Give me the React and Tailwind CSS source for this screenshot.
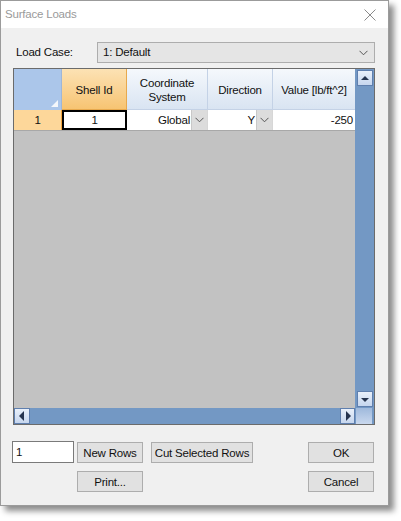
import React from "react";

const font = { fontFamily: '"Liberation Sans", Arial, sans-serif' };

const Chevron = ({ className = "" }) => (
  <svg width="9" height="6" viewBox="0 0 9 6" className={className}>
    <path d="M0.5 0.8 L4.5 4.8 L8.5 0.8" fill="none" stroke="#555" strokeWidth="1" />
  </svg>
);

const ScrollButton = ({ dir, className = "" }) => {
  const paths = {
    up: "M2 8 L6 4 L10 8 Z",
    down: "M2 5 L10 5 L6 9 Z",
    left: "M8 2 L8 12 L3 7 Z",
    right: "M5 2 L5 12 L10 7 Z",
  };
  const vertical = dir === "up" || dir === "down";
  return (
    <div
      className={`flex items-center justify-center border border-[#5f7fae] bg-gradient-to-b from-[#e9f0fa] to-[#c6d6ee] ${className}`}
    >
      <svg width={vertical ? 12 : 13} height={vertical ? 12 : 14} viewBox={vertical ? "0 0 12 12" : "0 0 13 14"}>
        <path d={paths[dir]} fill="#26344f" />
      </svg>
    </div>
  );
};

const Button = ({ children, className = "" }) => (
  <button
    className={`h-[21px] w-[66px] whitespace-nowrap border border-[#adadad] bg-[#e1e1e1] pt-[2px] text-[11.5px] tracking-[-0.2px] text-[#111] ${className}`}
  >
    {children}
  </button>
);

const ComboCell = ({ value, width }) => (
  <div className={`flex h-full ${width} border-r border-[#d7d7d7] bg-white`}>
    <div className="flex flex-1 items-center justify-end pr-[1px] pt-[1px]">{value}</div>
    <div className="flex w-[16px] items-center justify-center border-l border-[#c8c8c8] bg-[#dcdcdc]">
      <Chevron />
    </div>
  </div>
);

export default function App() {
  return (
    <div className="h-[521px] w-[401px] bg-white" style={font}>
      <div className="flex h-[506px] w-[389px] flex-col border border-[#9b9b9b] bg-[#f0f0f0] shadow-[5px_5px_6px_rgba(0,0,0,0.45)]">
        {/* Title bar */}
        <div className="flex h-[27px] items-center justify-between bg-white pl-[4px] pr-[12px]">
          <span className="text-[11.5px] tracking-[-0.2px] text-[#9a9a9a]">Surface Loads</span>
          <svg width="12" height="12" viewBox="0 0 12 12">
            <path d="M0.5 0.5 L11.5 11.5 M11.5 0.5 L0.5 11.5" stroke="#8a8a8a" strokeWidth="1" />
          </svg>
        </div>

        {/* Load case */}
        <div className="mt-[14px] flex h-[21px] items-center text-[11.5px] tracking-[-0.2px] text-[#111]">
          <span className="ml-[15px] w-[81px] pt-[1px]">Load Case:</span>
          <div className="flex h-[21px] w-[278px] items-center justify-between border border-[#adadad] bg-[#e5e5e5] pl-[5px] pr-[6px]">
            <span className="pt-[1px]">1: Default</span>
            <Chevron />
          </div>
        </div>

        {/* Grid */}
        <div className="ml-[12px] mt-[5px] flex h-[357px] w-[362px] flex-col border border-[#6b6b6b]">
          <div className="flex flex-1">
            <div className="flex flex-1 flex-col bg-[#c2c2c2] text-[11.5px] tracking-[-0.2px] text-[#111]">
              {/* Header */}
              <div className="flex h-[41px]">
                <div className="relative w-[48px] border-r border-[#9fb6d8] bg-[#abc6ea]">
                  <div className="absolute bottom-[3px] right-[3px] h-0 w-0 border-b-[7px] border-l-[7px] border-b-[#f4f7fb] border-l-transparent" />
                </div>
                <div className="flex w-[65px] items-center justify-center border-b border-r border-[#e7a94e] bg-gradient-to-b from-[#fce2b4] to-[#f7c472] pt-[3px]">
                  Shell Id
                </div>
                <div className="flex w-[81px] items-center justify-center border-b border-r border-[#c4d2e6] bg-gradient-to-b from-[#f5f8fc] to-[#d9e4f2] pt-[1px] text-center leading-[14px]">
                  Coordinate
                  <br />
                  System
                </div>
                <div className="flex w-[65px] items-center justify-center border-b border-r border-[#c4d2e6] bg-gradient-to-b from-[#f5f8fc] to-[#d9e4f2] pt-[3px]">
                  Direction
                </div>
                <div className="flex w-[82px] items-center justify-center whitespace-nowrap border-b border-[#c4d2e6] bg-gradient-to-b from-[#f5f8fc] to-[#d9e4f2] pt-[3px]">
                  Value [lb/ft^2]
                </div>
              </div>
              {/* Row 1 */}
              <div className="flex h-[21px] border-b border-[#a8a8a8]">
                <div className="flex w-[48px] items-center justify-center border-r border-[#f0a23c] bg-[#fdd79a] pt-[1px]">1</div>
                <div className="flex w-[65px] items-center justify-center border-2 border-black bg-white pt-[1px]">1</div>
                <ComboCell value="Global" width="w-[81px]" />
                <ComboCell value="Y" width="w-[65px]" />
                <div className="flex w-[82px] items-center justify-end bg-white pr-[2px] pt-[1px]">-250</div>
              </div>
            </div>
            {/* Vertical scrollbar */}
            <div className="flex w-[19px] flex-col justify-between bg-[#7398c4] pl-[2px] pr-[1px]">
              <ScrollButton dir="up" className="mt-[1px] h-[16px] w-[16px]" />
              <ScrollButton dir="down" className="mb-[1px] h-[16px] w-[16px]" />
            </div>
          </div>
          {/* Horizontal scrollbar */}
          <div className="flex h-[16px]">
            <div className="flex flex-1 justify-between bg-[#7398c4]">
              <ScrollButton dir="left" className="h-[16px] w-[16px]" />
              <ScrollButton dir="right" className="h-[16px] w-[15px]" />
            </div>
            <div className="w-[19px] bg-[#7398c4] pl-[1px] pr-[2px]">
              <div className="h-full w-full bg-gradient-to-b from-[#9fb9dc] to-[#c9d8ee]" />
            </div>
          </div>
        </div>

        {/* Bottom controls */}
        <div className="mt-[16px] flex h-[22px] items-center">
          <div className="ml-[11px] flex h-[22px] w-[62px] items-start border border-[#7a7a7a] bg-white pl-[3px] pt-[2px] text-[11.5px] text-[#111]">
            1
          </div>
          <Button className="ml-[3px]">New Rows</Button>
          <Button className="ml-[8px] w-[102px]">Cut Selected Rows</Button>
          <Button className="ml-auto mr-[14px]">OK</Button>
        </div>
        <div className="mt-[8px] flex h-[21px] items-center">
          <Button className="ml-[76px]">Print...</Button>
          <Button className="ml-auto mr-[14px]">Cancel</Button>
        </div>
      </div>
    </div>
  );
}
